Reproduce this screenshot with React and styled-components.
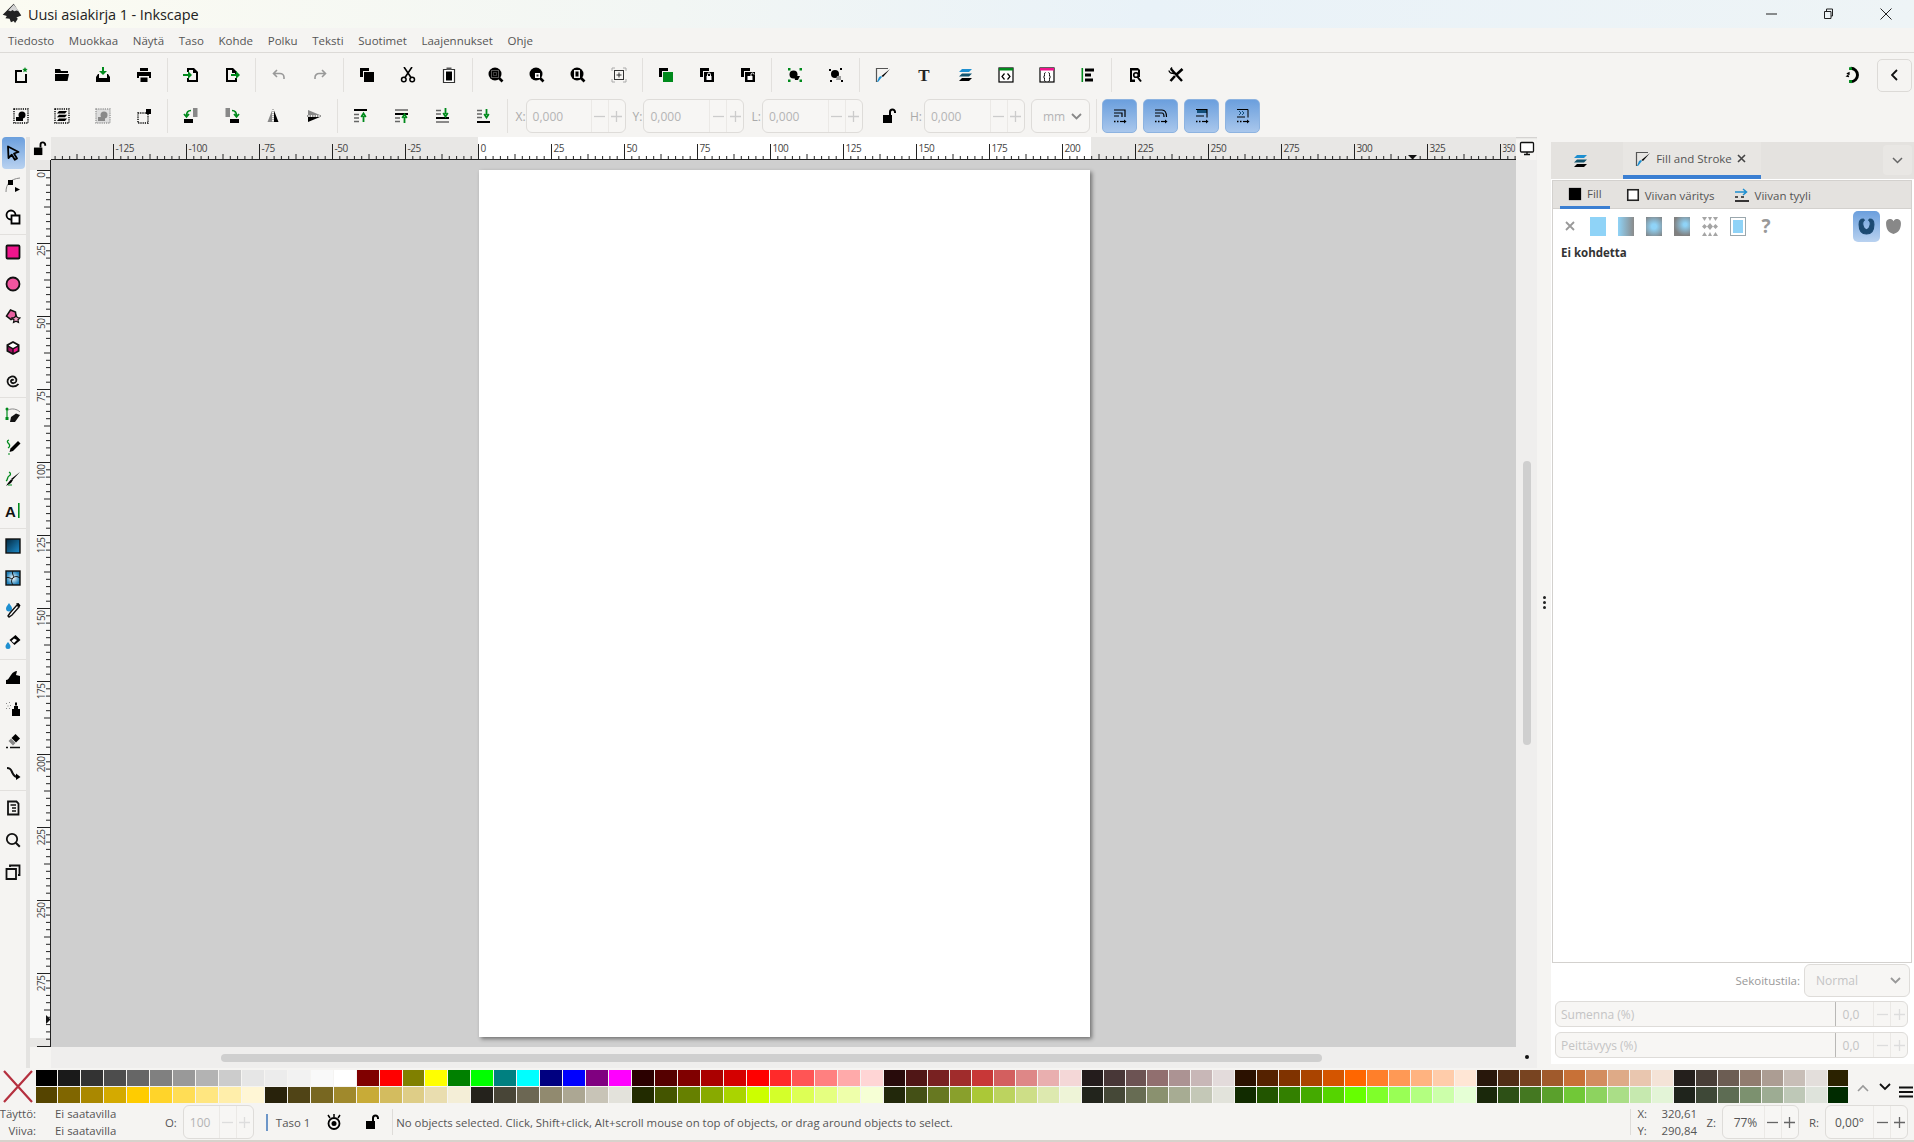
import React from "react"
import styled, { createGlobalStyle } from "styled-components"

const GREEN = "#008a1c"
const BLUE = "#1e8fd0"
const PINK = "#f0148c"

const Global = createGlobalStyle`
  html, body { margin: 0; padding: 0; background: #f5f4f2; }
  body { font-family: "Open Sans", "Noto Sans", "Liberation Sans", sans-serif; color: #444; overflow: hidden; }
  * { box-sizing: border-box; }
`

const Window = styled.div`
  width: 1914px;
  height: 1142px;
  display: flex;
  flex-direction: column;
  background: #f5f4f2;
  overflow: hidden;
`

const TitleBar = styled.div`
  height: 28px;
  flex: none;
  display: flex;
  align-items: center;
  padding-left: 2px;
  background: linear-gradient(90deg, #fbfbf2 0%, #f2f6f4 35%, #e9f2f8 60%, #eef4f6 100%);
`
const TitleText = styled.span`
  margin-left: 4px;
  font-size: 14.5px;
  color: #222;
  letter-spacing: -0.1px;
`
const WinControls = styled.div`
  margin-left: auto;
  display: flex;
  margin-right: -1px;
`
const WinBtn = styled.div`
  width: 57.5px;
  display: flex;
  justify-content: center;
`

const MenuBar = styled.div`
  height: 25px;
  flex: none;
  display: flex;
  align-items: center;
  padding-left: 8px;
  gap: 14.7px;
  font-size: 11.5px;
  color: #555;
  border-bottom: 1px solid #dcdad7;
`

const Toolbar = styled.div`
  height: ${p => p.$h}px;
  flex: none;
  display: flex;
  align-items: center;
  padding: 0 0 ${p => p.$pb || 0}px 0.5px;
`
const ToolBtn = styled.div`
  width: ${p => p.$w || 41}px;
  height: 34px;
  flex: none;
  display: flex;
  align-items: center;
  justify-content: center;
  padding-left: ${p => p.$pl || 0}px;
`
const TbSep = styled.div`
  width: 1px;
  height: 34px;
  margin: 0 ${p => p.$mr ?? 2.5}px 0 ${p => p.$ml ?? 2.5}px;
  flex: none;
  background: #e2e0dd;
`
const TbRight = styled.div`
  margin-left: auto;
  display: flex;
  align-items: center;
  padding-right: 2px;
`
const ChevBtn = styled.div`
  width: 35px;
  height: 33px;
  margin-left: 15px;
  border: 1px solid #dcdad7;
  border-radius: 5px;
  display: flex;
  align-items: center;
  justify-content: center;
`
const FieldLabel = styled.span`
  font-size: 12px;
  color: #aaa;
  margin: 0 ${p => p.$mr ?? 1}px 0 ${p => p.$ml ?? 7}px;
`
const SpinBox = styled.div`
  width: ${p => p.$w}px;
  height: ${p => p.$h || 34}px;
  flex: none;
  display: flex;
  align-items: stretch;
  border: 1px solid #dedcd9;
  border-radius: 6px;
  background: #f7f6f4;
  font-size: 12px;
  color: #b4b4b4;
`
const SpinValue = styled.div`
  flex: 1;
  min-width: 0;
  display: flex;
  align-items: center;
  justify-content: ${p => (p.$center ? "center" : "flex-start")};
  padding-left: ${p => p.$pl ?? (p.$center ? 0 : 6)}px;
  color: ${p => (p.$dark ? "#555" : "#b4b4b4")};
`
const SpinBtn = styled.div`
  width: 17px;
  flex: none;
  border-left: 1px solid #ebe9e6;
  display: flex;
  align-items: center;
  justify-content: center;
`
const UnitBox = styled(SpinBox)`
  align-items: center;
  justify-content: space-between;
  padding: 0 7px 0 11px;
  margin-left: 6px;
`
const BlueBtn = styled.div`
  width: 35px;
  height: 34px;
  flex: none;
  margin-right: 6px;
  border-radius: 5px;
  border: 1px solid #8db3e0;
  background: linear-gradient(180deg, #6b9fdd 0%, #a9c7ec 100%);
  display: flex;
  align-items: center;
  justify-content: center;
`

const Main = styled.div`
  height: 931px;
  flex: none;
  display: flex;
`
const ToolColumn = styled.div`
  width: 30px;
  flex: none;
  border-right: 4px solid #e4e3e1;
  display: flex;
  flex-direction: column;
  align-items: center;
`
const ToolItem = styled.div`
  width: 23px;
  height: 32px;
  flex: none;
  display: flex;
  align-items: center;
  justify-content: center;
  border-radius: 4px;
  background: ${p => (p.$active ? "linear-gradient(180deg, #6b9fdd 0%, #b9d2f0 100%)" : "none")};
`
const ToolSep = styled.div`
  width: 26px;
  height: 1px;
  flex: none;
  margin: 1px 0;
  background: #e2e0dd;
`

const Workspace = styled.div`
  flex: none;
  width: 1507px;
  display: grid;
  grid-template-columns: 21px 1465px 21px;
  grid-template-rows: 23px 887px 21px;
  box-shadow: inset 0 2px 2px -1px #c9c8c6;
`
const Corner = styled.div`
  display: flex;
  align-items: center;
  justify-content: center;
  background: #f5f4f2;
`
const RulerCell = styled.div`
  overflow: hidden;
  line-height: 0;
`
const MonitorCell = styled.div`
  display: flex;
  align-items: center;
  justify-content: center;
`
const Canvas = styled.div`
  background: #cfcfcf;
  padding: 10px 0 0 428px;
`
const Page = styled.div`
  width: 611px;
  height: 867px;
  background: #fff;
  box-shadow: 2px 2px 4px rgba(0, 0, 0, 0.45);
`
const VScroll = styled.div`
  background: #efeeed;
  padding: 301px 0 0 7px;
`
const VThumb = styled.div`
  width: 8px;
  height: 284px;
  border-radius: 4px;
  background: #cfcfcf;
`
const HScroll = styled.div`
  background: #efeeed;
  padding: 7px 0 0 170px;
`
const HThumb = styled.div`
  width: 1101px;
  height: 8px;
  border-radius: 4px;
  background: #cfcfcf;
`
const DotCell = styled.div`
  background: #efeeed;
  display: flex;
  align-items: center;
  justify-content: center;
  padding-bottom: 2px;
`
const Dot = styled.div`
  width: 4px;
  height: 4px;
  border-radius: 50%;
  background: #111;
`

const Gutter = styled.div`
  width: 14px;
  flex: none;
  display: flex;
  flex-direction: column;
  align-items: center;
  justify-content: center;
  gap: 2px;
`
const GripDot = styled.div`
  width: 3px;
  height: 3px;
  border-radius: 50%;
  background: #222;
`

const Panel = styled.div`
  width: 363px;
  flex: none;
  margin: 5px 0 4px;
  display: flex;
  flex-direction: column;
  background: #fff;
`
const PanelTabs = styled.div`
  height: 37px;
  flex: none;
  display: flex;
  background: #e4e2df;
`
const PanelTab = styled.div`
  width: ${p => p.$w}px;
  display: flex;
  align-items: center;
  justify-content: center;
  gap: 5px;
  padding-right: ${p => p.$pr || 0}px;
  font-size: 11.5px;
  color: #555;
  border-bottom: ${p => (p.$active ? "4px solid #3b7fd2" : "none")};
  background: ${p => (p.$active ? "#e8e6e3" : "none")};
`
const PanelChevron = styled.div`
  width: 29px;
  height: 30px;
  margin: 3px 2px 0 auto;
  border-radius: 4px;
  background: #e9e7e4;
  display: flex;
  align-items: center;
  justify-content: center;
`
const Notebook = styled.div`
  height: 783px;
  flex: none;
  margin: 1px 2px 0 1px;
  border: 1px solid #d3d1ce;
  display: flex;
  flex-direction: column;
`
const SubTabs = styled.div`
  height: 28px;
  flex: none;
  padding-left: 7px;
  display: flex;
  gap: 8px;
  background: #e4e2df;
  border-bottom: 1px solid #d3d1ce;
`
const SubTab = styled.div`
  display: flex;
  align-items: center;
  gap: 5px;
  padding: 0 8px;
  margin-left: ${p => p.$ml || 0}px;
  font-size: 11.5px;
  color: #555;
  height: 28px;
  border-bottom: ${p => (p.$active ? "3px solid #3b7fd2" : "none")};
`
const PaintRow = styled.div`
  height: 34px;
  flex: none;
  display: flex;
  align-items: center;
  padding: 0 4px 0 3px;
`
const PaintBtn = styled.div`
  width: 28px;
  height: 28px;
  flex: none;
  display: flex;
  align-items: center;
  justify-content: center;
  color: #999;
  font-size: ${p => p.$fs || 14}px;
  font-weight: 700;
`
const PaintSwatch = styled.div`
  width: 16px;
  height: 19px;
  background: ${p => p.$bg};
  border: ${p => p.$border || "none"};
  box-shadow: ${p => p.$inset || "none"};
`
const RuleBtn = styled.div`
  width: 27px;
  height: 31px;
  margin-left: ${p => (p.$first ? "auto" : "0")};
  border-radius: 5px;
  display: flex;
  align-items: center;
  justify-content: center;
  background: ${p => (p.$active ? "linear-gradient(180deg, #6b9fdd 0%, #b9d2f0 100%)" : "none")};
`
const NoObject = styled.div`
  margin: 2px 0 0 8px;
  font-size: 11.5px;
  font-weight: 700;
  color: #333;
`
const BlendRow = styled.div`
  display: flex;
  align-items: center;
  justify-content: flex-end;
  margin: 1px 4px 4px 0;
  font-size: 11.5px;
  color: #999;
`
const BlendBox = styled(SpinBox)`
  margin-left: 4px;
  padding: 0 8px 0 11px;
  align-items: center;
  justify-content: space-between;
  color: #c4c4c4;
`
const SliderRow = styled(SpinBox)`
  margin: 0 0 5px 4px;
  color: #c4c4c4;
`
const SliderLabel = styled.div`
  flex: 1;
  display: flex;
  align-items: center;
  padding-left: 5px;
  border-right: 1px solid #b9b8b6;
`
const SliderValue = styled.div`
  width: 37px;
  display: flex;
  align-items: center;
  justify-content: center;
  padding-right: 7px;
`

const PaletteRow = styled.div`
  height: 36px;
  flex: none;
  display: flex;
  align-items: flex-start;
  padding-top: 2px;
`
const NoColor = styled.div`
  width: 35.5px;
  height: 33px;
  flex: none;
  display: flex;
  align-items: center;
  justify-content: center;
`
const Swatches = styled.div`
  display: grid;
  grid-template-columns: repeat(37, 22.95px) repeat(44, 21.95px);
  grid-template-rows: 16px 16px;
  row-gap: 1px;
  flex: none;
`
const Swatch = styled.div`
  background: ${p => p.$c};
  margin-right: 1px;
`
const PaletteTools = styled.div`
  flex: 1;
  display: flex;
  align-items: center;
  height: 33px;
  padding-left: 3px;
`
const PaletteTool = styled.div`
  width: ${p => p.$w}px;
  flex: none;
  display: flex;
  justify-content: center;
  margin-top: ${p => p.$mt || 0}px;
`

const StatusBar = styled.div`
  flex: 1;
  display: flex;
  align-items: center;
  font-size: 11.4px;
  color: #555;
  border-bottom: 2px solid #d8d2cc;
`
const FillGrid = styled.div`
  width: 165px;
  flex: none;
  display: grid;
  grid-template-columns: 55px auto;
  row-gap: 2px;
  line-height: 15px;
`
const FillLabel = styled.span`
  text-align: right;
  padding-right: 19px;
  margin-left: -4px;
`
const StatusLabel = styled.span`
  margin: 0 ${p => p.$mr ?? 6}px 0 ${p => p.$ml ?? 0}px;
`
const LayerMark = styled.div`
  width: 2px;
  height: 17px;
  flex: none;
  margin: 0 8px 0 12px;
  background: #6d96c8;
`
const StatusIcon = styled.div`
  width: ${p => p.$w}px;
  flex: none;
  display: flex;
  justify-content: center;
`
const StatusSep = styled.div`
  width: 1px;
  height: 26px;
  flex: none;
  margin: ${p => p.$m};
  background: #dedcd9;
`
const Coords = styled.div`
  width: 66px;
  flex: none;
  display: grid;
  grid-template-columns: 24px auto;
  row-gap: 2px;
  line-height: 15px;
`
const CoordValue = styled.span`
  text-align: right;
  padding-right: 9px;
`

const ink = { fill: "#000" }

const frontBack = "M1 1h9v3H4v6H1z"
const Lock = ({ open }) => (
  <g>
    <rect x="7.5" y="9" width="5" height="4" fill="#fff" />
    <path d={open ? "M11 9V7.5a1.5 1.5 0 0 1 3 0" : "M8.5 9V7.5a1.5 1.5 0 0 1 3 0V9"} fill="none" stroke="#fff" strokeWidth="1" />
  </g>
)
const Glass = ({ children }) => (
  <g>
    <circle cx="7" cy="7" r="6.5" fill="#000" />
    <path d="M11 11l3.5 3.5" stroke="#000" strokeWidth="2.6" />
    {children}
  </g>
)
const Dotted = ({ d, c = "#000" }) => <path d={d} fill="none" stroke={c} strokeWidth="1.4" strokeDasharray="1.2 1" />
const Stack = ({ top, mid, low }) => (
  <g>
    <path d="M5 2h10l-3 3H2z" fill={top} />
    <path d="M5 6.5h10l-3 3H2z" fill={mid} />
    <path d="M5 11h10l-3 3H2z" fill={low} />
  </g>
)
const Dashes = ({ d }) => <path d={d} fill="none" stroke="#666" strokeWidth="1.5" />
const UpArrow = ({ y }) => <path d={`M10.5 ${y + 9}V${y + 3}M8.2 ${y + 4}l2.3-3.5 2.3 3.5`} fill="none" stroke={GREEN} strokeWidth="1.8" />
const DownArrow = ({ y }) => <path d={`M10.5 ${y}v6M8.2 ${y + 5}l2.3 3.5 2.3-3.5`} fill="none" stroke={GREEN} strokeWidth="1.8" />
const RuleIcon = ({ children }) => (
  <g>
    {children}
    <path d="M2 13.5h1.5M5 13.5h1.5" stroke="#000" strokeWidth="1.6" />
    <path d="M8 13.5h5" stroke="#000" strokeWidth="1.2" />
    <path d="M12 11.5l2.5 2-2.5 2z" {...ink} />
  </g>
)

const icons = {
  new: <g><path d="M2 3h7v2H4v9h8V7h2v9H2z" {...ink} /><path d="M12 0l.8 1.8 1.9.2-1.4 1.3.4 1.9-1.7-1-1.7 1 .4-1.9L9.3 2l1.9-.2z" fill={GREEN} /></g>,
  open: <path d="M1 2h5l1 2h7v2H1zM1 7h14l-1.5 7H1z" {...ink} />,
  save: <g><path d="M7 0h2v4h3L8 8 4 4h3z" fill={GREEN} /><path d="M3 7h1v4h8V7h1l2 3v5H1v-5z" {...ink} /></g>,
  print: <path d="M4 1h8v3H4zM1 5h14v6h-2V9H3v2H1zM4.5 10.5h7V15h-7z" {...ink} />,
  import: <g><path d="M5 1h6l4 4v10H4v-4h2v2h7V6h-3V3H6v2H4V1z" {...ink} /><path d="M0 7h5V4l4 4-4 4V9H0z" fill={GREEN} /></g>,
  export: <g><path d="M2 1h7l4 4v2h-2V6H8V3H4v10h7v-2h2v4H2z" {...ink} /><path d="M7 7h5V4l4 4-4 4V9H7z" fill={GREEN} /></g>,
  undo: <path d="M6 3L2.5 6.5 6 10M3 6.5h6a4 4 0 0 1 4 4V12" fill="none" stroke="#999" strokeWidth="1.6" />,
  redo: <path d="M10 3l3.5 3.5L10 10M13 6.5H7a4 4 0 0 0-4 4V12" fill="none" stroke="#999" strokeWidth="1.6" />,
  copy: <path d={frontBack + "M5 5h10v10H5z"} {...ink} />,
  cut: <g><circle cx="3.8" cy="12.5" r="2.3" fill="none" stroke="#000" strokeWidth="1.5" /><circle cx="12.2" cy="12.5" r="2.3" fill="none" stroke="#000" strokeWidth="1.5" /><path d="M5 10.5L12 0M11 10.5L4 0" stroke="#000" strokeWidth="1.6" /></g>,
  paste: <g><path d="M2.5 2.5h11v13h-11z" fill="#fff" stroke="#333" strokeWidth="1.2" /><path d="M5.5 0.5h5V3h-5z" fill="#555" /><path d="M5 4.5h6v9H5z" {...ink} /></g>,
  zoomSel: <Glass><rect x="3.5" y="3.5" width="7" height="7" fill="none" stroke="#aaa" strokeDasharray="1 1" /><rect x="5.5" y="5.5" width="3" height="3" fill="none" stroke="#777" strokeDasharray="1 1" /></Glass>,
  zoomDraw: <Glass><path d="M6 6h5v5H6z" fill="#fff" /><path d="M7.5 7.5h2v2h-2z" fill="#333" /></Glass>,
  zoomPage: <Glass><rect x="4" y="3" width="6" height="8" fill="#eee" /><rect x="5.5" y="4.5" width="3" height="5" fill="#000" /></Glass>,
  zoomCenter: <g><path d="M1 4V1h3M12 1h3v3M15 12v3h-3M4 15H1v-3" fill="none" stroke="#aaa" strokeWidth="1" /><rect x="3.5" y="3.5" width="9" height="9" fill="none" stroke="#333" /><path d="M8 5.5v5M5.5 8h5" stroke="#333" /></g>,
  dup: <g><path d={frontBack} {...ink} /><path d="M5 5h10v10H5z" fill={GREEN} /></g>,
  clone: <g><path d={frontBack + "M5 5h10v10H5z"} {...ink} /><Lock /></g>,
  unlink: <g><path d={frontBack + "M5 5h10v10H5z"} {...ink} /><Lock open /></g>,
  group: <g><circle cx="6.5" cy="7.5" r="4" {...ink} /><path d="M7 9h6l-2 4H8z" {...ink} /><path d="M1 1h2.5v2.5H1zM12.5 1H15v2.5h-2.5zM1 12.5h2.5V15H1zM12.5 12.5H15V15h-2.5z" fill={GREEN} /></g>,
  ungroup: <g><circle cx="7" cy="7" r="4" {...ink} /><path d="M9 9h4v4H8z" fill="#999" /><path d="M1 2h2v2H1zM12 1h2v2h-2zM2 13h2v2H2zM13 13h2v2h-2z" {...ink} /></g>,
  fillStroke: <g><path d="M1.5 15V1.5H13" fill="none" stroke="#555" strokeWidth="1.2" /><path d="M15 2L8 10 6.5 9z" {...ink} /><path d="M7 10L3 15H2l2-5 2-1z" fill={BLUE} /></g>,
  text: <text x="8" y="13.5" textAnchor="middle" fontFamily="Liberation Serif, serif" fontWeight="700" fontSize="17" fill="#222">T</text>,
  layers: <Stack top={BLUE} mid="#14556f" low="#000" />,
  xml: <g><rect x="1" y="1" width="14" height="14" fill="#fff" stroke="#000" strokeWidth="1.2" /><path d="M1 1h14v2.5H1z" fill={GREEN} /><path d="M6.5 6.5L4 9.5l2.5 3M9.5 6.5l2.5 3-2.5 3" fill="none" stroke="#000" strokeWidth="1.2" /></g>,
  css: <g><rect x="1" y="1" width="14" height="14" fill="#fff" stroke="#000" strokeWidth="1.2" /><path d="M1 1h14v2.5H1z" fill={PINK} /><path d="M6.5 5.5c-2 0 0 4-2 4.5 2 .5 0 4.500 2 4.500M9.500 5.500c2 0 0 4 2 4.500-2 .5 0 4.500-2 4.500" fill="none" stroke="#000" strokeWidth="1" /></g>,
  align: <g><path d="M1.5 1h1.6v14H1.5z" fill={GREEN} /><path d="M5 1.5h9v3H5zM5 6.5h6v3H5zM5 11.5h8v3H5z" {...ink} /></g>,
  docProps: <g><path d="M3 1h8l2 2v7h-2V3.5H5v9h3V15H3z" {...ink} /><circle cx="9" cy="8" r="2.3" fill="none" stroke="#000" strokeWidth="1.6" /><path d="M10.5 10l3.5 4.5" stroke="#000" strokeWidth="2" /></g>,
  prefs: <g><path d="M3 2l11 12" stroke="#000" strokeWidth="2.4" /><path d="M14.5 2L8.5 7.5M7 9l-4.500 5" stroke="#000" strokeWidth="2.6" /><path d="M1 3.5a3 3 0 0 0 4 2.500l1 1M4 .5L2.500 2.500" fill="none" stroke="#000" strokeWidth="1.4" /></g>,
  snap: <g><path d="M6 2a6 6 0 1 1 0 12" fill="none" stroke="#000" strokeWidth="2.6" /><path d="M4.5 1h2.6v2.600H4.500zM4.500 12.400h2.600V15H4.500z" fill={GREEN} /><path d="M2.500 7l2-1v1.500l-2 1.500 2 .5" fill="none" stroke="#000" strokeWidth="1" /></g>,

  selAll: <g><Dotted d="M1 1h14v14H1z" /><circle cx="9" cy="7" r="3.5" {...ink} /><path d="M3 9h7v4H3z" {...ink} /></g>,
  selLayers: <g><Dotted d="M1 1h14v14H1z" /><path d="M5 3h8l-2 2.400H3zM5 6.800h8l-2 2.400H3zM5 10.600h8L11 13H3z" {...ink} /></g>,
  invert: <g><rect x="1" y="1" width="14" height="14" fill="#ddd" /><Dotted d="M1 1h14v14H1z" c="#999" /><circle cx="9" cy="7" r="3.5" fill="#888" /><path d="M3 9h7v4H3z" fill="#888" /></g>,
  deselect: <g><Dotted d="M2 5h10v10H2z" /><path d="M10 1h5v5h-5z" {...ink} /></g>,
  rotCcw: <g><path d="M10 0h4.500v9H10z" fill="#888" /><path d="M1 11h9v4H1z" {...ink} /><path d="M8 2.500C4.500 2.500 3.500 5 3.500 8M1 6l2.500 3L6 6" fill="none" stroke={GREEN} strokeWidth="1.7" /></g>,
  rotCw: <g><path d="M1.500 0H6v9H1.500z" fill="#888" /><path d="M6 11h9v4H6z" {...ink} /><path d="M8 2.500c3.500 0 4.500 2.500 4.500 5.500M10 6l2.500 3L15 6" fill="none" stroke={GREEN} strokeWidth="1.7" /></g>,
  flipH: <g><path d="M7 2.500L2.500 14H7z" fill="#888" /><path d="M9 2.500L13.500 14H9z" {...ink} /><path d="M8 1v14" stroke="#777" strokeDasharray="1 1" /></g>,
  flipV: <g><path d="M2 2l12 5H2z" fill="#888" /><path d="M2 14l12-5H2z" {...ink} /><path d="M1 8h14" stroke="#333" strokeDasharray="1.5 1" /></g>,
  top: <g><path d="M1 1h13v2H1z" {...ink} /><Dashes d="M1 6.500h5M1 10h5M1 13.500h5" /><UpArrow y={5} /></g>,
  raise: <g><Dashes d="M1 2h13" /><path d="M1 5h13v2H1z" {...ink} /><Dashes d="M1 10h5M1 13.500h5" /><UpArrow y={6} /></g>,
  lower: <g><Dashes d="M1 2.500h5M1 6h5" /><path d="M1 9h13v2H1z" {...ink} /><Dashes d="M1 14h13" /><DownArrow y={0} /></g>,
  bottom: <g><Dashes d="M1 2.500h5M1 6h5M1 9.500h5" /><path d="M1 13h13v2H1z" {...ink} /><DownArrow y={1} /></g>,
  unlock: <g><path d="M1 7h9v8H1z" {...ink} /><path d="M8 7V4a2.500 2.500 0 0 1 5 0v1" fill="none" stroke="#000" strokeWidth="2" /></g>,

  rule1: <RuleIcon><path d="M2 2h11v7M2 5h8v4M2 8h5" fill="none" stroke="#000" strokeWidth="1.2" /></RuleIcon>,
  rule2: <RuleIcon><path d="M2 2h7c3 0 4.500 2 4.500 7M2 5h7c1.500 0 2 2 2 4M2 8h5" fill="none" stroke="#000" strokeWidth="1.2" /></RuleIcon>,
  rule3: <RuleIcon><path d="M3 1.500h10V5H3z" fill="#124e78" /><path d="M2 1.500h11v8M2 8h8" fill="none" stroke="#000" strokeWidth="1.1" /></RuleIcon>,
  rule4: <RuleIcon><path d="M2 1.500h11v8M2 9h8" fill="none" stroke="#000" strokeWidth="1" /><path d="M4 3l2 2-2 2M7 3l2 2-2 2" fill="none" stroke="#124e78" /></RuleIcon>,

  toolSelect: <path d="M3 1.500l10.500 5.500-4.500 1.500 3 5-2.200 1.200-3-5L3.500 13z" fill="#8db8e8" stroke="#000" strokeWidth="1.8" strokeLinejoin="round" />,
  toolNode: <g><path d="M1 15C1 7 5 2 15 1" fill="none" stroke="#888" /><path d="M3 3h5v5H3z" {...ink} /><path d="M10 10l5 2.500-5 2.500z" {...ink} /></g>,
  toolTweakShape: <g><circle cx="6" cy="6" r="4.5" fill="#fff" stroke="#000" strokeWidth="1.8" /><path d="M6.500 6.500h8v8h-8z" fill="#fff" stroke="#000" strokeWidth="1.8" /></g>,
  toolRect: <rect x="1.5" y="1.5" width="13" height="13" fill="#f0148c" stroke="#111" strokeWidth="1.8" rx="1" />,
  toolCircle: <circle cx="8" cy="8" r="6.5" fill="#f0559f" stroke="#111" strokeWidth="1.8" />,
  toolStar: <g><path d="M5.500 2l5 2 .5 5-5 2.500L1.500 8z" fill="#e85fa0" stroke="#111" strokeWidth="1.5" /><path d="M11 7l1.300 2.500 2.700.4-2 1.900.5 2.700-2.500-1.300-2.500 1.300.5-2.700-2-1.900 2.700-.4z" fill="#f4a0c8" stroke="#111" strokeWidth="1.2" /></g>,
  toolBox: <g><path d="M8 1l6.500 3.500v7L8 15l-6.500-3.500v-7z" fill="#111" /><path d="M8 3l4.500 2.500L8 8 3.500 5.500z" fill="#fff" /><path d="M8.700 9.200l4-2.200v3.500l-4 2.200z" fill={PINK} /><path d="M7.300 9.200l-4-2.200v3.500l4 2.200z" fill="#a01060" /></g>,
  toolSpiral: <path d="M8.500 8.500c-.8-1.500-3-.5-2.500 1.300.6 2 4.200 2 5.200-.6 1-3-2-5.500-5-4.500C2.500 5.800 1.500 9.500 3.500 12.300c2.300 2.900 7.300 3 10-.3" fill="none" stroke="#111" strokeWidth="1.8" />,
  toolPen: <g><path d="M2 2v10" stroke={GREEN} strokeWidth="1.2" /><circle cx="2" cy="2" r="1.5" fill={GREEN} /><rect x="0.5" y="10" width="3" height="3" fill={GREEN} /><path d="M3 3c4-2 9-1 12 2" fill="none" stroke="#888" /><path d="M15 8l-5 7H5l1-5 5-3.500z" fill="#111" /></g>,
  toolPencil: <g><path d="M4 1c-3 1-1 3 0 4s1 3-1 4" fill="none" stroke={GREEN} strokeWidth="1.3" /><path d="M13 2l2.500 2.500L8 12l-3.500 1 1-3.500z" {...ink} /><path d="M3 15h2" stroke={GREEN} /></g>,
  toolCallig: <g><path d="M4 1c2 1 2 3 0 4s-1 4-3 5" fill="none" stroke={GREEN} strokeWidth="1.3" /><path d="M15 1L7.500 9 6 8z" {...ink} /><path d="M6 8.500L3 12l-2 3 5-3 2-3z" {...ink} /><path d="M3 14h4" stroke={GREEN} /></g>,
  toolText: <g><text x="0" y="14" fontFamily="Liberation Sans, sans-serif" fontWeight="700" fontSize="15" fill="#111">A</text><path d="M13 0h1.600v15H13z" fill={GREEN} /></g>,
  toolGrad: <g><defs><linearGradient id="gr" x1="0" y1="0" x2="1" y2="1"><stop offset="0" stopColor="#02283f" /><stop offset="1" stopColor="#1e8fd0" /></linearGradient></defs><rect x="1" y="1" width="14" height="14" fill="url(#gr)" stroke="#111" strokeWidth="1.4" /></g>,
  toolMesh: <g><defs><radialGradient id="me"><stop offset="0" stopColor="#fff" /><stop offset="1" stopColor="#1e7fb8" /></radialGradient></defs><rect x="1" y="1" width="14" height="14" fill="url(#me)" stroke="#111" strokeWidth="1.4" /><path d="M8 1c-2 3 2 5 0 7s-2 4 0 7M1 8c3-2 5 2 7 0s4-2 7 0" fill="none" stroke="#111" /></g>,
  toolDropper: <g><path d="M4 1c-2 3-3 4-3 5.500a3 3 0 0 0 6 0C7 5 6 4 4 1z" fill={BLUE} /><path d="M12 3l2 2-7 8-3 2-1-1 2-3z" fill="#fff" stroke="#111" strokeWidth="1.4" /><path d="M11 1.500l3.500 3.500 1-1.500-2-2.500z" {...ink} /></g>,
  toolBucket: <g><path d="M3 8c-1.500 2-2.500 3-2.500 4.500a2.500 2.500 0 0 0 5 0C5.500 11 4.500 10 3 8z" fill={BLUE} /><path d="M10.500 1l5 5-6 5-5-5z" {...ink} /><path d="M9 4.500l3 1.500-3 3-2.500-2z" fill="#fff" /></g>,
  toolTweak: <path d="M1 15v-4c2 0 3-2 5-5s4-4 6-4l-1 4 4 1v8z" {...ink} />,
  toolSpray: <g><path d="M7 8h8v7H7zM9 5h4v3H9z" {...ink} /><path d="M10 1.500h2v3h-2z" {...ink} /><path d="M1 2h1v1H1zM4 1h1v1H4zM2.500 4.500h1v1h-1zM5 4h1v1H5zM1 7h1v1H1zM4 7h1v1H4z" fill="#888" /></g>,
  toolEraser: <g><path d="M10.500 1l4.500 4.500-4 4-4.500-4.500z" {...ink} /><path d="M6 5.500L10.500 10 8 12.500 3.500 8z" fill="#888" /><path d="M1 14.500h2M5 14.500h10" stroke="#111" strokeWidth="1.4" /></g>,
  toolConnector: <g><path d="M2 3c4 0 4 2 5.500 5s2.500 4 5 4" fill="none" stroke="#111" strokeWidth="2" /><path d="M11 8.500l4.500 3.500-4.500 3z" {...ink} /></g>,
  toolPages: <g><path d="M3 1.500h8.500l2 2v11H3z" fill="none" stroke="#111" strokeWidth="1.8" /><path d="M5.500 5h5.500M7 8h4M7 11h4" stroke="#111" strokeWidth="1.3" /></g>,
  toolZoom: <g><circle cx="7" cy="7" r="5.2" fill="none" stroke="#111" strokeWidth="1.8" /><path d="M10.800 10.800l4 4" stroke="#111" strokeWidth="2" /></g>,
  toolPageCopy: <g><path d="M1.500 5h9.500v10H1.500z" fill="none" stroke="#111" strokeWidth="1.8" /><path d="M5 3V1.500h9.500V11H13" fill="none" stroke="#111" strokeWidth="1.8" /></g>,

  fillMark: <rect x="1" y="1" width="14" height="14" {...ink} />,
  strokeMark: <rect x="2" y="2" width="12" height="12" fill="#fff" stroke="#222" strokeWidth="1.8" />,
  strokeStyle: <g><path d="M1 5h11M9 2l3.500 3L9 8" fill="none" stroke={BLUE} strokeWidth="1.5" /><path d="M1 10h3M7 10h3" stroke="#222" strokeWidth="1.5" /><path d="M1 14h14" stroke="#222" strokeWidth="1.8" /></g>,
  nonzero: <path d="M8 15C3 15 1 11 1 6c0-4 2-5 4-5l1 1c-1.500 1-2 3-1 6 .5 2 1.500 3 3 3s2.500-1 3-3c1-3 .5-5-1-6l1-1c2 0 4 1 4 5 0 5-2 9-7 9z" fill="#1c4a72" stroke="#1c4a72" />,
  evenodd: <path d="M8 15C3 14 1 10 1 5c0-3 2-4 4-4 1 0 2 .5 3 2 1-1.500 2-2 3-2 2 0 4 1 4 4 0 5-2 9-7 10z" fill="#888" />,
  monitor: <g><rect x="1.5" y="1.5" width="13" height="9.5" rx="1" fill="#fff" stroke="#111" strokeWidth="1.3" /><path d="M5 13.500h6M8 11v2" stroke="#111" strokeWidth="1.4" /></g>,
  eye: <g><circle cx="8" cy="9.5" r="5.5" fill="none" stroke="#000" strokeWidth="1.8" /><circle cx="8" cy="9.5" r="2.5" {...ink} /><path d="M2 1l2 3M8 0v3M14 1l-2 3" stroke="#000" strokeWidth="1.5" /></g>,
  logo: <g><path d="M8.500 0.500L0.500 8.500l3 1-1 1.500 3 .5 1 2.500 2-1 1 1.500 2-3-1-1 3.500-1.500z" fill="#222" /><path d="M8.500 1L4.500 5.500l2 .5 1-1 1.500 1 1.500-.5 2 .5z" fill="#d5d5d5" /></g>,
}

const Icon = ({ name, size = 16 }) => (
  <svg width={size} height={size} viewBox="0 0 16 16" style={{ display: "block", flex: "none" }}>
    {icons[name]}
  </svg>
)

const Stroke = ({ w, h, d, c = "#333", sw = 1.2 }) => (
  <svg width={w} height={h} viewBox={`0 0 ${w} ${h}`} style={{ display: "block", flex: "none" }}>
    <path d={d} fill="none" stroke={c} strokeWidth={sw} />
  </svg>
)

const Minus = ({ c = "#ccc" }) => <Stroke w={11} h={11} d="M0 5.500h11" c={c} sw={1.3} />
const Plus = ({ c = "#ccc" }) => <Stroke w={11} h={11} d="M0 5.500h11M5.500 0v11" c={c} sw={1.3} />
const Chevron = ({ c = "#888", sw = 1.8 }) => <Stroke w={11} h={7} d="M1 1l4.500 4.500L10 1" c={c} sw={sw} />

const Spin = ({ w, value, h, center, dark, pl, c }) => (
  <SpinBox $w={w} $h={h}>
    <SpinValue $center={center} $dark={dark} $pl={pl}>{value}</SpinValue>
    <SpinBtn><Minus c={c} /></SpinBtn>
    <SpinBtn><Plus c={c} /></SpinBtn>
  </SpinBox>
)

const ticksFor = () => {
  const out = []
  for (let i = -60; i <= 145; i++) out.push({ u: i * 2.5, major: i % 10 === 0, mid: i % 5 === 0 })
  return out
}
const SCALE = 2.92

const TopRuler = () => (
  <svg width="1465" height="23" style={{ display: "block" }}>
    <rect width="1465" height="23" fill="#e8e7e5" />
    <rect x="427" width="613" height="23" fill="#fff" />
    {ticksFor().map(t => {
      const x = 427.5 + t.u * SCALE
      const len = t.major ? 15 : t.mid ? 5 : 3
      return (
        <g key={t.u}>
          <path d={`M${x} 22V${22 - len}`} stroke="#222" />
          {t.major && t.u > -150 && (
            <text
              x={x + 2}
              y={15}
              fontSize="10"
              letterSpacing="-0.5"
              fontFamily="Open Sans, sans-serif"
              fill="#444"
              textLength={t.u === 350 ? 12.5 : undefined}
              lengthAdjust="spacingAndGlyphs"
            >
              {t.u}
            </text>
          )}
        </g>
      )
    })}
    <path d="M0 22.500h1465" stroke="#222" />
    <path d="M1357 18h9l-4.500 4.500z" fill="#111" />
  </svg>
)

const LeftRuler = () => (
  <svg width="21" height="887" style={{ display: "block" }}>
    <rect width="21" height="887" fill="#e8e7e5" />
    <rect y="10" width="21" height="868" fill="#f8f8f7" />
    {ticksFor().filter(t => t.u >= 0 && t.u <= 300).map(t => {
      const y = 10.5 + t.u * SCALE
      const len = t.major ? 14 : t.mid ? 7 : 5
      return (
        <g key={t.u}>
          <path d={`M21 ${y}H${21 - len}`} stroke="#222" />
          {t.major && t.u < 300 && (
            <text transform={`translate(15 ${y + 2}) rotate(-90)`} textAnchor="end" fontSize="10" letterSpacing="-0.5" fontFamily="Open Sans, sans-serif" fill="#444">{t.u}</text>
          )}
        </g>
      )
    })}
    <path d="M20.500 0v887" stroke="#222" />
    <path d="M16 855l4.500 4.500L16 864z" fill="#111" />
  </svg>
)

const row1 = "000000 1a1a1a 333333 4d4d4d 666666 808080 999999 b3b3b3 cccccc e6e6e6 ececec f2f2f2 f9f9f9 ffffff 800000 ff0000 808000 ffff00 008000 00ff00 008080 00ffff 000080 0000ff 800080 ff00ff 2b0000 550000 800000 aa0000 d40000 ff0000 ff2a2a ff5555 ff8080 ffaaaa ffd5d5 280b0b 501616 782121 a02c2c c83737 d35f5f de8787 e9afaf f4d7d7 241c1c 483737 6c5353 916f6f ac9393 c8b7b7 e3dbdb 2b1100 552200 803300 aa4400 d45500 ff6600 ff7f2a ff9955 ffb380 ffccaa ffe6d5 28170b 502d16 784421 a05a2c c87137 d38d5f deaa87 e9c6af f4e3d7 241f1c 483e37 6c5d53 917c6f ac9d93 c8beb7 e3dedb 2b2200".split(" ")
const row2 = "554400 806600 aa8800 d4aa00 ffcc00 ffd42a ffdd55 ffe680 ffeeaa fff6d5 28220b 504416 786721 a0892c c8ab37 d3bc5f decd87 e9ddaf f4eed7 24221c 484537 6c6753 918a6f aca793 c8c4b7 e3e2db 222b00 445500 668000 88aa00 aad400 ccff00 d4ff2a ddff55 e5ff80 eeffaa f6ffd5 22280b 445016 677821 89a02c abc837 bcd35f cdde87 dde9af eef4d7 22241c 454837 676c53 8a916f a7ac93 c4c8b7 e2e3db 112b00 225500 338000 44aa00 55d400 66ff00 7fff2a 99ff55 b3ff80 ccffaa e5ffd5 1a280b 2d5016 447821 5aa02c 71c837 8dd35f aade87 c6e9af e3f4d7 1f241c 3e4837 5d6c53 7c916f 9dac93 bec8b7 dee3db 002b00".split(" ")

const menus = ["Tiedosto", "Muokkaa", "Näytä", "Taso", "Kohde", "Polku", "Teksti", "Suotimet", "Laajennukset", "Ohje"]

const topGroups = [
  ["new", "open", "save", "print"],
  ["import", "export"],
  ["undo", "redo"],
  ["copy", "cut", "paste"],
  ["zoomSel", "zoomDraw", "zoomPage", "zoomCenter"],
  ["dup", "clone", "unlink"],
  ["group", "ungroup"],
  ["fillStroke", "text", "layers", "xml", "css", "align"],
  ["docProps", "prefs"],
]
const secondGroups = [
  ["selAll", "selLayers", "invert", "deselect"],
  ["rotCcw", "rotCw", "flipH", "flipV"],
  ["top", "raise", "lower", "bottom"],
]
const toolGroups = [
  ["toolSelect", "toolNode", "toolTweakShape"],
  ["toolRect", "toolCircle", "toolStar", "toolBox", "toolSpiral"],
  ["toolPen", "toolPencil", "toolCallig", "toolText"],
  ["toolGrad", "toolMesh", "toolDropper", "toolBucket"],
  ["toolTweak", "toolSpray", "toolEraser", "toolConnector"],
  ["toolPages", "toolZoom", "toolPageCopy"],
]

const Groups = ({ groups }) =>
  groups.map((g, i) => (
    <React.Fragment key={i}>
      {i > 0 && <TbSep />}
      {g.map(n => <ToolBtn key={n}><Icon name={n} /></ToolBtn>)}
    </React.Fragment>
  ))

const paintSwatches = [
  "#8fd3f7",
  "linear-gradient(90deg, #8fd3f7, #8a8a8a)",
  "radial-gradient(circle, #8fd3f7 20%, #808080 100%)",
  "radial-gradient(circle at 70% 40%, #8fd3f7 10%, #808080 70%)",
]

export default function App() {
  return (
    <Window>
      <Global />
      <TitleBar>
        <Icon name="logo" size={22} />
        <TitleText>Uusi asiakirja 1 - Inkscape</TitleText>
        <WinControls>
          <WinBtn><Stroke w={11} h={11} d="M0 6h11" c="#222" sw={1} /></WinBtn>
          <WinBtn><Stroke w={11} h={11} d="M1.500 3.500h6.500v7H1.500zM3.500 3.500V1h6v7H8" c="#222" sw={1} /></WinBtn>
          <WinBtn><Stroke w={12} h={12} d="M.5.5l11 11M11.500.5l-11 11" c="#222" sw={1} /></WinBtn>
        </WinControls>
      </TitleBar>
      <MenuBar>{menus.map(m => <span key={m}>{m}</span>)}</MenuBar>

      <Toolbar $h={44}>
        <Groups groups={topGroups} />
        <TbRight>
          <Icon name="snap" size={18} />
          <ChevBtn><Stroke w={7} h={12} d="M6 1L1 6l5 5" c="#111" sw={1.8} /></ChevBtn>
        </TbRight>
      </Toolbar>

      <Toolbar $h={40} $pb={2}>
        <Groups groups={secondGroups} />
        <TbSep />
        <FieldLabel $ml={5} $mr={0}>X:</FieldLabel>
        <Spin w={100} value="0,000" />
        <FieldLabel>Y:</FieldLabel>
        <Spin w={101} value="0,000" />
        <FieldLabel>L:</FieldLabel>
        <Spin w={101} value="0,000" />
        <ToolBtn $w={47} $pl={7}><Icon name="unlock" /></ToolBtn>
        <FieldLabel $ml={0} $mr={2}>H:</FieldLabel>
        <Spin w={101} value="0,000" />
        <UnitBox $w={59}>mm <Chevron /></UnitBox>
        <TbSep $ml={6} $mr={5.5} />
        <BlueBtn><Icon name="rule1" /></BlueBtn>
        <BlueBtn><Icon name="rule2" /></BlueBtn>
        <BlueBtn><Icon name="rule3" /></BlueBtn>
        <BlueBtn><Icon name="rule4" /></BlueBtn>
      </Toolbar>

      <Main>
        <ToolColumn>
          {toolGroups.map((g, i) => (
            <React.Fragment key={i}>
              {i > 0 && <ToolSep />}
              {g.map(n => <ToolItem key={n} $active={n === "toolSelect"}><Icon name={n} /></ToolItem>)}
            </React.Fragment>
          ))}
        </ToolColumn>

        <Workspace>
          <Corner><Icon name="unlock" size={15} /></Corner>
          <RulerCell><TopRuler /></RulerCell>
          <MonitorCell><Icon name="monitor" /></MonitorCell>
          <RulerCell><LeftRuler /></RulerCell>
          <Canvas><Page /></Canvas>
          <VScroll><VThumb /></VScroll>
          <Corner />
          <HScroll><HThumb /></HScroll>
          <DotCell><Dot /></DotCell>
        </Workspace>

        <Gutter><GripDot /><GripDot /><GripDot /></Gutter>

        <Panel>
          <PanelTabs>
            <PanelTab $w={72} $pr={14}><Icon name="layers" /></PanelTab>
            <PanelTab $w={138} $pr={3} $active>
              <Icon name="fillStroke" />
              Fill and Stroke
              <Stroke w={9} h={9} d="M1 1l7 7M8 1L1 8" c="#444" sw={1.6} />
            </PanelTab>
            <PanelChevron><Chevron c="#666" sw={1.5} /></PanelChevron>
          </PanelTabs>
          <Notebook>
            <SubTabs>
              <SubTab $active><Icon name="fillMark" size={14} />Fill</SubTab>
              <SubTab><Icon name="strokeMark" size={14} />Viivan väritys</SubTab>
              <SubTab $ml={-5}><Icon name="strokeStyle" />Viivan tyyli</SubTab>
            </SubTabs>
            <PaintRow>
              <PaintBtn><Stroke w={10} h={10} d="M1 1l8 8M9 1L1 9" c="#999" sw={1.8} /></PaintBtn>
              {paintSwatches.map(s => <PaintBtn key={s}><PaintSwatch $bg={s} /></PaintBtn>)}
              <PaintBtn>
                <svg width="16" height="19" viewBox="0 0 16 19" style={{ display: "block" }}>
                  <path d="M0 0h5L2.500 4zM6 0h4L8 4zM11 0h5l-2.500 4zM2.500 7l2.500 2.500L2.500 12 0 9.500zM8 6l3 3.500L8 13 5 9.500zM13.500 7l2.500 2.500-2.500 2.500-2.500-2.500zM2.500 15L5 19H0zM8 15l2 4H6zM13.500 15l2.500 4h-5z" fill="#a5a5a5" />
                </svg>
              </PaintBtn>
              <PaintBtn><PaintSwatch $bg="#8fd3f7" $border="1px solid #9aa7ad" $inset="inset 0 0 0 2px #fff" /></PaintBtn>
              <PaintBtn $fs={19}>?</PaintBtn>
              <RuleBtn $first $active><Icon name="nonzero" size={17} /></RuleBtn>
              <RuleBtn><Icon name="evenodd" size={17} /></RuleBtn>
            </PaintRow>
            <NoObject>Ei kohdetta</NoObject>
          </Notebook>
          <BlendRow>
            Sekoitustila:
            <BlendBox $w={106} $h={33}>Normal <Chevron c="#999" /></BlendBox>
          </BlendRow>
          <SliderRow $w={353} $h={26}>
            <SliderLabel>Sumenna (%)</SliderLabel>
            <SliderValue>0,0</SliderValue>
            <SpinBtn><Minus c="#ddd" /></SpinBtn>
            <SpinBtn><Plus c="#ddd" /></SpinBtn>
          </SliderRow>
          <SliderRow $w={353} $h={26}>
            <SliderLabel>Peittävyys (%)</SliderLabel>
            <SliderValue>0,0</SliderValue>
            <SpinBtn><Minus c="#ddd" /></SpinBtn>
            <SpinBtn><Plus c="#ddd" /></SpinBtn>
          </SliderRow>
        </Panel>
      </Main>

      <PaletteRow>
        <NoColor><Stroke w={30} h={33} d="M1 1l28 31M29 1L1 32" c="#b5303f" sw={2.2} /></NoColor>
        <Swatches>
          {[...row1, ...row2].map((c, i) => <Swatch key={i} $c={"#" + c} />)}
        </Swatches>
        <PaletteTools>
          <PaletteTool $w={22} $mt={3}><Stroke w={12} h={8} d="M1 7l5-5 5 5" c="#999" sw={1.6} /></PaletteTool>
          <PaletteTool $w={22}><Stroke w={12} h={8} d="M1 1l5 5 5-5" c="#111" sw={1.8} /></PaletteTool>
          <PaletteTool $w={19} $mt={10}><Stroke w={14} h={12} d="M0 1.500h14M0 6h14M0 10.500h14" c="#111" sw={1.8} /></PaletteTool>
        </PaletteTools>
      </PaletteRow>

      <StatusBar>
        <FillGrid>
          <FillLabel>Täyttö:</FillLabel><span>Ei saatavilla</span>
          <FillLabel>Viiva:</FillLabel><span>Ei saatavilla</span>
        </FillGrid>
        <StatusLabel>O:</StatusLabel>
        <Spin w={71} value="100" c="#ddd" />
        <LayerMark />
        <span>Taso 1</span>
        <StatusIcon $w={48}><Icon name="eye" /></StatusIcon>
        <StatusIcon $w={30}><Icon name="unlock" /></StatusIcon>
        <StatusSep $m="0 3px 0 4px" />
        <span>No objects selected. Click, Shift+click, Alt+scroll mouse on top of objects, or drag around objects to select.</span>
        <StatusSep $m="0 6px 0 auto" />
        <Coords>
          <span>X:</span><CoordValue>320,61</CoordValue>
          <span>Y:</span><CoordValue>290,84</CoordValue>
        </Coords>
        <StatusLabel $ml={3}>Z:</StatusLabel>
        <Spin w={77} value="77%" center dark pl={4} c="#666" />
        <StatusLabel $ml={10}>R:</StatusLabel>
        <SpinBox $w={83} style={{ marginRight: 6 }}>
          <SpinValue $center $dark>0,00°</SpinValue>
          <SpinBtn><Minus c="#666" /></SpinBtn>
          <SpinBtn><Plus c="#666" /></SpinBtn>
        </SpinBox>
      </StatusBar>
    </Window>
  )
}
